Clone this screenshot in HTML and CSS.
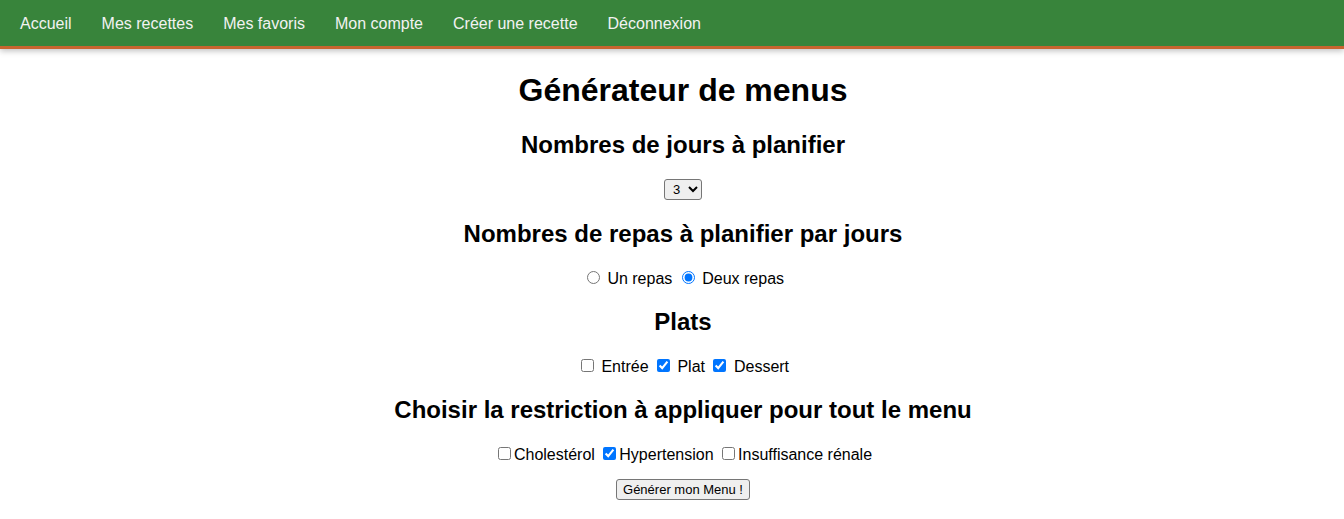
FILE: index.html
```html
<!DOCTYPE html>
<html lang="fr">
<head>
<meta charset="utf-8">
<title>Générateur de menus</title>
<link rel="stylesheet" href="styles.css">
</head>
<body>
<nav class="topnav">
  <a href="#">Accueil</a>
  <a href="#">Mes recettes</a>
  <a href="#">Mes favoris</a>
  <a href="#">Mon compte</a>
  <a href="#">Créer une recette</a>
  <a href="#">Déconnexion</a>
</nav>
<main class="content">
  <h1>Générateur de menus</h1>
  <form class="gen-form">
    <h2>Nombres de jours à planifier</h2>
    <div class="row">
      <select class="days">
        <option>1</option><option>2</option><option selected>3</option><option>4</option><option>5</option><option>6</option><option>7</option>
      </select>
    </div>
    <h2>Nombres de repas à planifier par jours</h2>
    <div class="row">
      <input type="radio" name="repas" id="r1"> <label for="r1">Un repas</label>
      <input type="radio" name="repas" id="r2" checked> <label for="r2">Deux repas</label>
    </div>
    <h2>Plats</h2>
    <div class="row">
      <input type="checkbox" id="c1"> <label for="c1">Entrée</label>
      <input type="checkbox" id="c2" checked> <label for="c2">Plat</label>
      <input type="checkbox" id="c3" checked> <label for="c3">Dessert</label>
    </div>
    <h2>Choisir la restriction à appliquer pour tout le menu</h2>
    <div class="row">
      <input type="checkbox" id="d1"><label for="d1">Cholestérol</label>
      <input type="checkbox" id="d2" checked><label for="d2">Hypertension</label>
      <input type="checkbox" id="d3"><label for="d3">Insuffisance rénale</label>
    </div>
    <div class="row submit-row">
      <button type="button" class="gen-btn">Générer mon Menu !</button>
    </div>
  </form>
</main>
</body>
</html>
```
FILE: styles.css
```css
html, body {
  margin: 0;
  padding: 0;
  background: #ffffff;
  font-family: "Liberation Sans", Arial, sans-serif;
  color: #000;
}
.topnav {
  display: flex;
  align-items: center;
  padding: 1px 5px 0;
  box-sizing: border-box;
  background: #38843b;
  border-bottom: 3px solid #c8652f;
  box-shadow: 0 2px 6px rgba(0,0,0,0.25);
  height: 49px;
}
.topnav a {
  color: #f2f2f2;
  text-decoration: none;
  font-size: 16px;
  padding: 0 15px;
}
.content {
  text-align: center;
  padding-left: 22px;
}
h1 {
  font-size: 32px;
  margin: 23px 0 22px;
}
h2 {
  font-size: 24px;
  margin: 20px 0;
}
.row {
  font-size: 16px;
}
input[type="checkbox"], input[type="radio"] {
  width: 13px;
  height: 13px;
}
.days {
  font-family: "Liberation Sans", Arial, sans-serif;
  font-size: 13px;
  width: 38px;
  height: 21px;
  padding: 0 2px 0 4px;
  background: #efefef;
  border: 1px solid #767676;
  border-radius: 3px;
  color: #000;
}
.submit-row {
  margin-top: 15px;
}
.gen-btn {
  font-family: "Liberation Sans", Arial, sans-serif;
  font-size: 13px;
  height: 21px;
  padding: 1px 6px;
  background: #efefef;
  border: 1px solid #767676;
  border-radius: 3px;
  color: #000;
}
```
